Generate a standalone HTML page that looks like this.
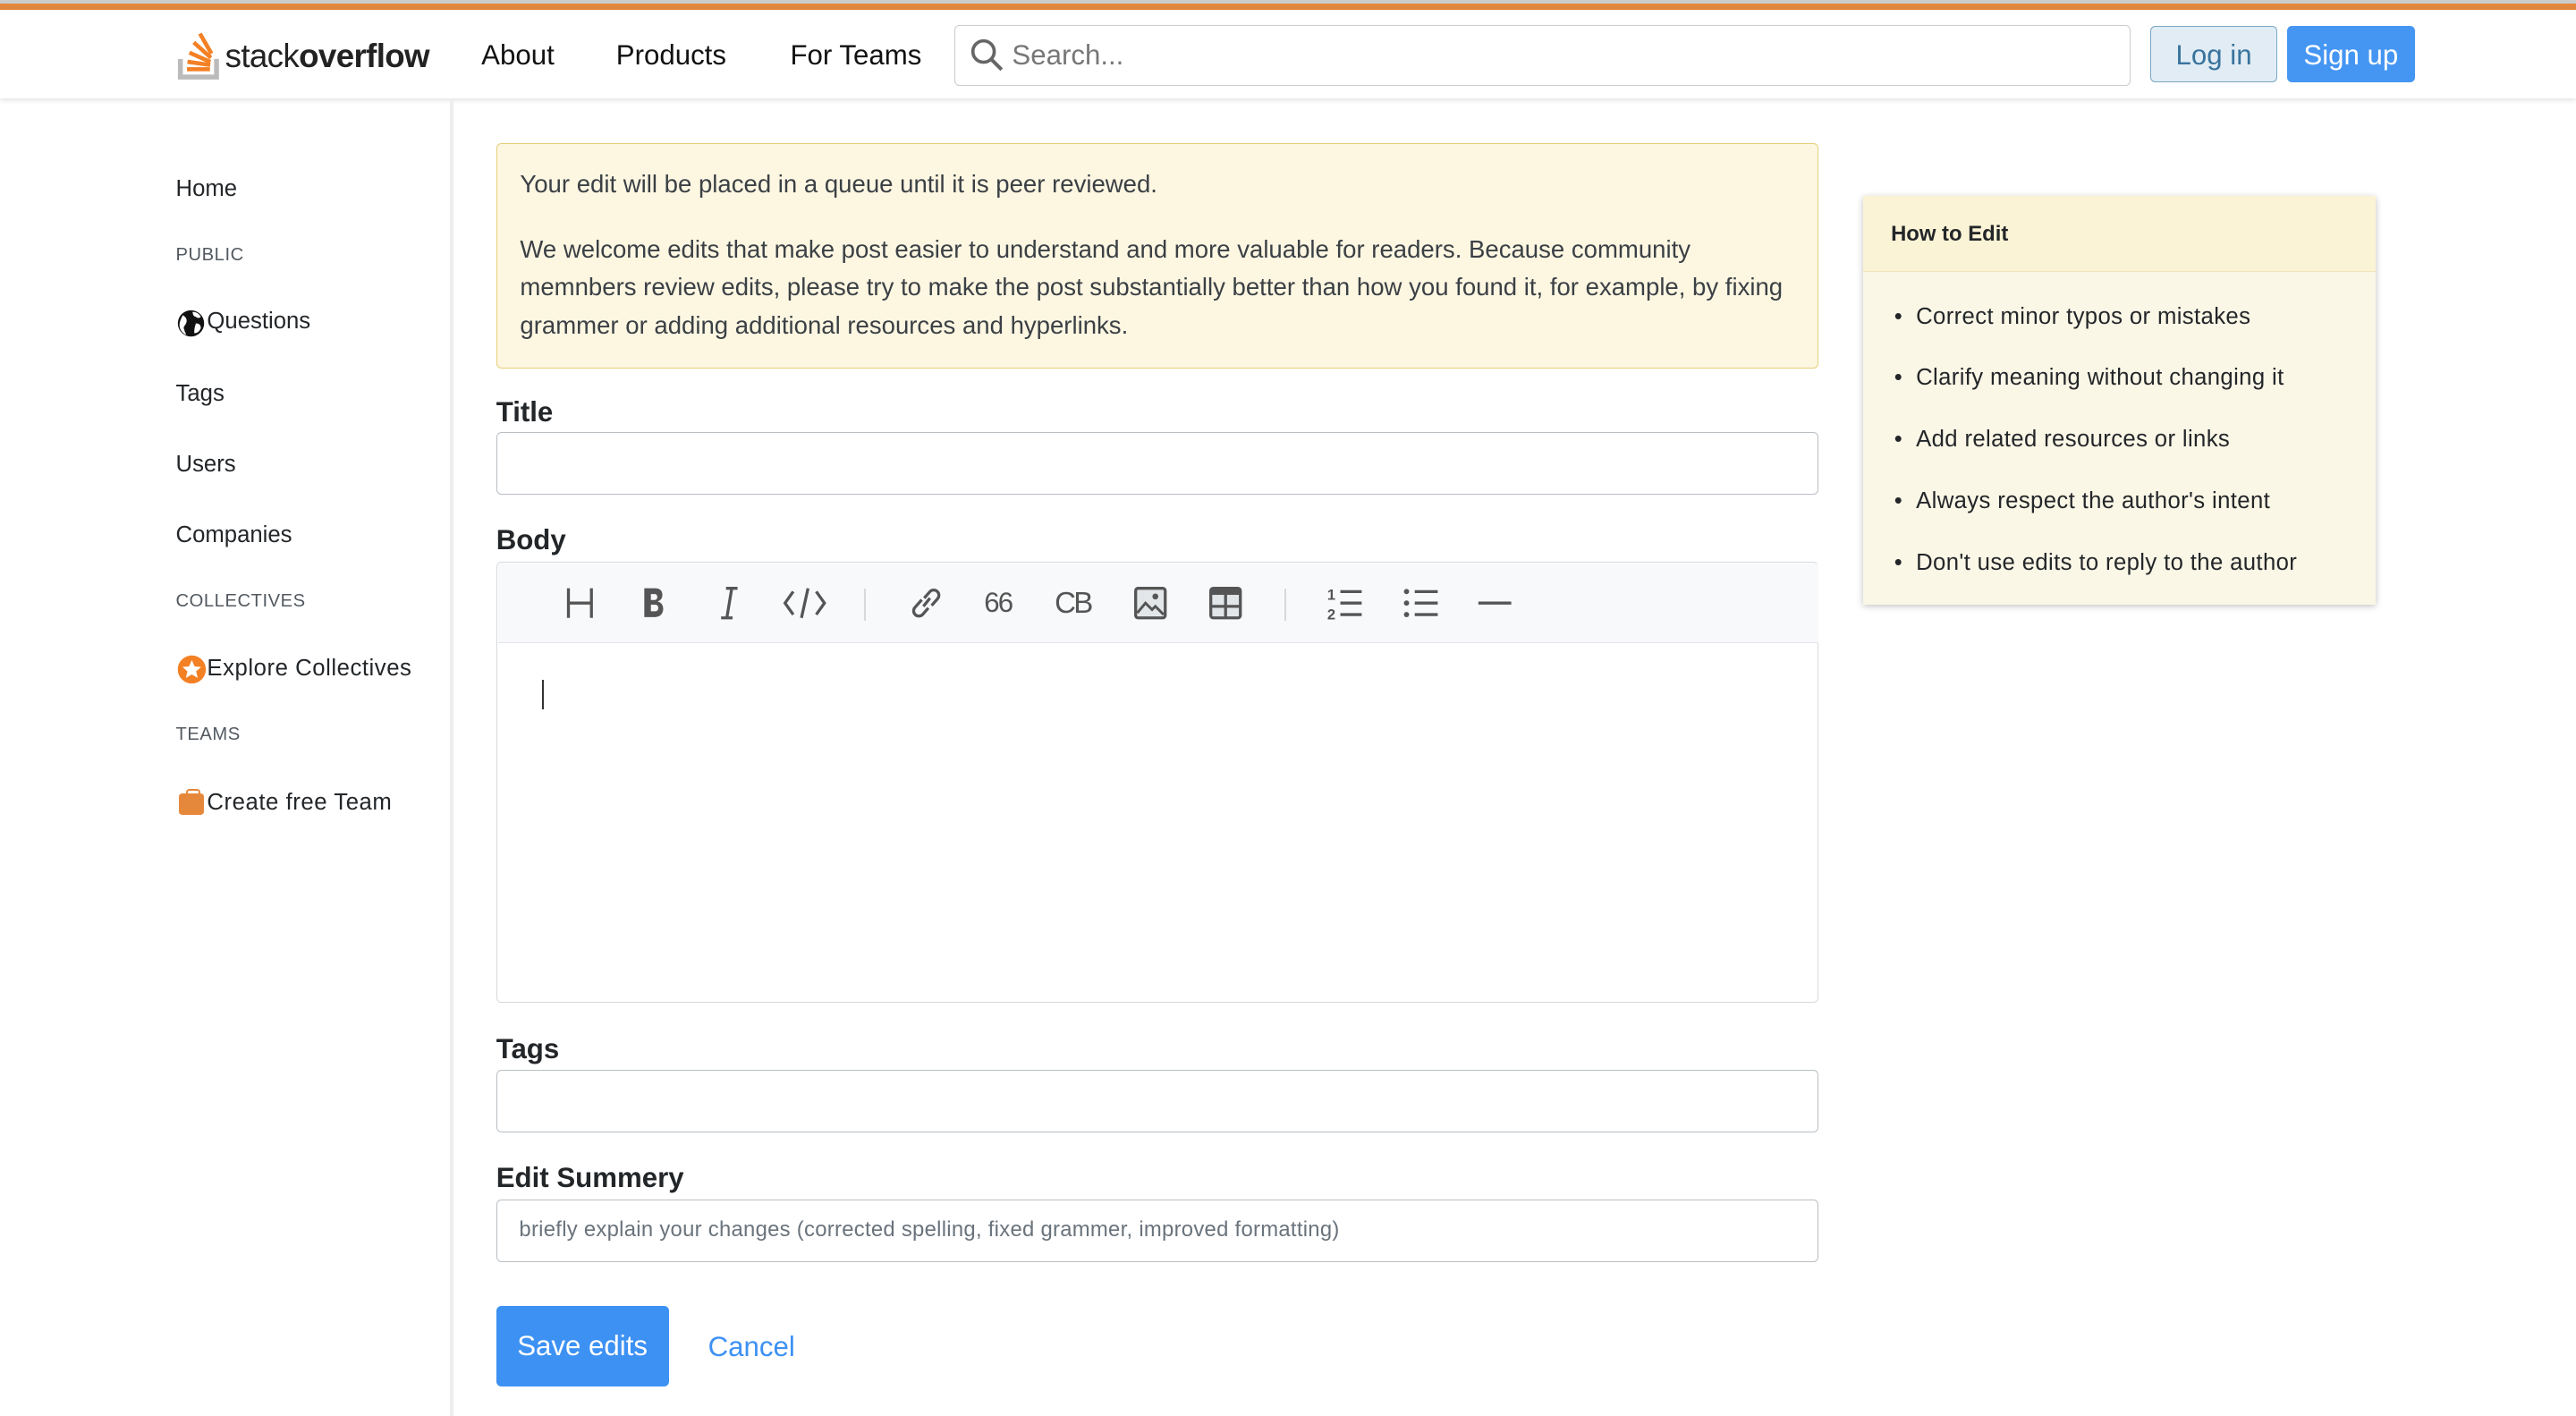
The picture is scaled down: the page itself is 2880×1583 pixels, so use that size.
<!DOCTYPE html>
<html><head><meta charset="utf-8"><style>
html,body{margin:0;padding:0;background:#fff;overflow:hidden}
#w{position:relative;width:1568px;height:862px;zoom:1.83673;font-family:"Liberation Sans",sans-serif;color:#232629}
.a{position:absolute;white-space:nowrap}
.nav{font-size:17px;color:#111;top:24px}
.sb{font-size:14px;color:#232629;left:107px}
.cap{font-size:11px;color:#525960;left:107px;letter-spacing:.3px}
.lbl{font-size:17px;font-weight:bold;left:302px;color:#232629}
.inp{position:absolute;left:302px;width:804px;height:37px;border:1px solid #babfc4;border-radius:3px;background:#fff}
.tb svg{position:absolute;top:356px}
</style></head><body><div id="w">
<div class="a" style="left:0;top:0;width:1568px;height:2px;background:#ccc"></div>
<div class="a" style="left:0;top:2px;width:1568px;height:4px;background:#e2873d"></div>
<div class="a" style="left:0;top:6px;width:1568px;height:54px;background:#fff;box-shadow:0 1px 3px rgba(0,0,0,.12)"></div>
<svg class="a" style="left:108px;top:17px" width="28" height="32" viewBox="0 0 28 32">
<path d="M2 19v11h22V19" fill="none" stroke="#bcbbbb" stroke-width="3"/>
<g fill="#f48024"><rect x="6" y="24" width="14" height="2.5"/><rect x="6.5" y="19.5" width="14" height="2.5" transform="rotate(8 6.5 19.5)"/><rect x="8" y="14" width="14" height="2.5" transform="rotate(24 8 14)"/><rect x="11" y="8" width="14" height="2.5" transform="rotate(42 11 8)"/><rect x="15" y="3" width="14" height="2.5" transform="rotate(60 15 3)"/></g></svg>
<div class="a" style="left:137px;top:23px;font-size:20px;letter-spacing:-.35px;color:#222">stack<b>overflow</b></div>
<div class="a nav" style="left:293px">About</div>
<div class="a nav" style="left:375px">Products</div>
<div class="a nav" style="left:481px">For Teams</div>
<div class="a" style="left:581px;top:15px;width:715px;height:36px;border:1px solid #ccc;border-radius:3px"></div>
<svg class="a" style="left:590px;top:23px" width="22" height="22" viewBox="0 0 22 22"><circle cx="8.5" cy="8.5" r="6.5" fill="none" stroke="#666" stroke-width="2"/><path d="M13.5 13.5l6 6" stroke="#666" stroke-width="2.2"/></svg>
<div class="a" style="left:616px;top:24px;font-size:17px;color:#777">Search...</div>
<div class="a" style="left:1309px;top:16px;width:76px;height:33px;background:#e1ecf4;border:1px solid #7aa7c7;border-radius:3px;color:#39739d;font-size:17px;text-align:center;line-height:35px">Log in</div>
<div class="a" style="left:1392px;top:16px;width:78px;height:34px;background:#4596f3;border-radius:3px;color:#fff;font-size:17px;text-align:center;line-height:36px">Sign up</div>

<div class="a" style="left:274px;top:60px;width:2px;height:802px;background:#eee"></div>
<div class="a sb" style="top:107px">Home</div>
<div class="a cap" style="top:149px">PUBLIC</div>
<svg class="a" style="left:107px;top:188px" width="18" height="18" viewBox="0 0 18 18"><circle cx="9" cy="9" r="8" fill="#111"/><path d="M4 4c2 1 3 3 2 5s-2 2-1 4c0 1 1 2 1 3-2-1-4-3-4-6 0-2 1-4 2-6zM10 2c2 0 4 1 5 3-1 1-2 1-3 0-1 0-2-1-2-3zM12 9c2 0 3 1 3 3-1 2-2 3-4 3 0-2 0-3 1-6z" fill="#fff"/></svg>
<div class="a sb" style="top:188px;left:126px">Questions</div>
<div class="a sb" style="top:232px">Tags</div>
<div class="a sb" style="top:275px">Users</div>
<div class="a sb" style="top:318px">Companies</div>
<div class="a cap" style="top:360px">COLLECTIVES</div>
<svg class="a" style="left:107px;top:398px" width="19" height="19" viewBox="0 0 20 20"><circle cx="10" cy="10" r="9" fill="#f48024"/><path d="M10 4l1.8 4 4.2.4-3.2 2.8 1 4.2L10 13.2 6.2 15.4l1-4.2L4 8.4 8.2 8z" fill="#fff"/></svg>
<div class="a sb" style="top:399px;left:126px;letter-spacing:.3px">Explore Collectives</div>
<div class="a cap" style="top:441px">TEAMS</div>
<div class="a" style="left:109px;top:483px;width:15px;height:13px;background:#e6883c;border-radius:2px"></div>
<div class="a" style="left:113px;top:480px;width:7px;height:4px;border:1.5px solid #e6883c;border-bottom:none;border-radius:2px 2px 0 0"></div>
<div class="a sb" style="top:481px;left:126px;letter-spacing:.3px">Create free Team</div>

<div class="a" style="left:302px;top:87px;width:776px;height:108px;padding:14px;background:#fdf7e2;border:1px solid #e6cf79;border-radius:3px;font-size:15px;line-height:23px;white-space:normal;color:#3b4045">
<div style="margin-top:-1px">Your edit will be placed in a queue until it is peer reviewed.</div>
<div style="margin-top:17px">We welcome edits that make post easier to understand and more valuable for readers. Because community memnbers review edits, please try to make the post substantially better than how you found it, for example, by fixing grammer or adding additional resources and hyperlinks.</div></div>

<div class="a lbl" style="top:241px">Title</div>
<div class="inp" style="top:263px"></div>
<div class="a lbl" style="top:319px">Body</div>
<div class="a" style="left:302px;top:342px;width:804px;height:267px;border:1px solid #d6d9dc;border-radius:3px;background:#fff"></div>
<div class="a" style="left:303px;top:343px;width:804px;height:48px;background:#f8f9fb;border-bottom:1px solid #e3e6e8"></div>
<div class="a" style="left:330px;top:414px;width:1px;height:18px;background:#333"></div>
<div class="tb">
<svg style="left:343px" width="20" height="22" viewBox="0 0 20 22"><path d="M3 2v18M17 2v18M3 11h14" stroke="#555" stroke-width="1.8" fill="none"/></svg>
<svg style="left:388px" width="20" height="22" viewBox="0 0 20 22"><path d="M4 2h6.5c3 0 4.5 1.5 4.5 4s-1.5 3.6-3 4c2 .4 3.5 2 3.5 4.5 0 3-2 5-5 5H4z" fill="#555"/><path d="M8 5.5h2.3c1 0 1.6.7 1.6 1.8s-.6 1.8-1.6 1.8H8zM8 12h2.6c1.2 0 1.9.8 1.9 2s-.7 2-1.9 2H8z" fill="#f8f9fb"/></svg>
<svg style="left:434px" width="20" height="22" viewBox="0 0 20 22"><path d="M8 2h7M5 20h7M11.5 2l-3 18" stroke="#555" stroke-width="1.8" fill="none"/></svg>
<svg style="left:476px" width="28" height="22" viewBox="0 0 28 22"><path d="M7 4L2 11l5 7M21 4l5 7-5 7M16 2l-4 18" stroke="#555" stroke-width="1.8" fill="none"/></svg>
<div class="a" style="left:526px;top:358px;width:1px;height:20px;background:#d6d9dc"></div>
<svg style="left:552px" width="24" height="22" viewBox="0 0 24 22"><path d="M10 13l4-5M9 9l-4 4.5a3 3 0 0 0 4.5 4.5L13 14M15 12.5l3.5-4A3 3 0 0 0 14 4l-3.5 4" stroke="#555" stroke-width="1.8" fill="none"/></svg>
<div class="a" style="left:599px;top:357px;font-size:17px;color:#555;letter-spacing:-1px">66</div>
<div class="a" style="left:642px;top:357px;font-size:18px;color:#555;letter-spacing:-1.5px">CB</div>
<svg style="left:689px" width="22" height="22" viewBox="0 0 22 22"><rect x="2" y="2" width="18" height="18" rx="1.5" fill="#e3e6e8" stroke="#555" stroke-width="1.8"/><path d="M3 17l5-6 4 4 2-2 5 5" stroke="#555" stroke-width="1.6" fill="none"/><circle cx="14" cy="7" r="1.8" fill="#555"/></svg>
<svg style="left:735px" width="22" height="22" viewBox="0 0 22 22"><rect x="2" y="2" width="18" height="18" rx="1.5" fill="#e3e6e8" stroke="#555" stroke-width="1.8"/><rect x="2" y="2" width="18" height="4" fill="#555"/><path d="M11 6v14M2 13h18" stroke="#555" stroke-width="1.8"/></svg>
<div class="a" style="left:782px;top:358px;width:1px;height:20px;background:#d6d9dc"></div>
<svg style="left:807px" width="24" height="22" viewBox="0 0 24 22"><path d="M9 4h13M9 11h13M9 18h13" stroke="#555" stroke-width="1.8"/><text x="1" y="9" font-size="9" font-family="Liberation Sans" fill="#555" font-weight="bold">1</text><text x="1" y="21" font-size="9" font-family="Liberation Sans" fill="#555" font-weight="bold">2</text></svg>
<svg style="left:853px" width="24" height="22" viewBox="0 0 24 22"><path d="M8 4h14M8 11h14M8 18h14" stroke="#555" stroke-width="1.8"/><circle cx="3" cy="4" r="1.6" fill="#555"/><circle cx="3" cy="11" r="1.6" fill="#555"/><circle cx="3" cy="18" r="1.6" fill="#555"/></svg>
<svg style="left:899px" width="22" height="22" viewBox="0 0 22 22"><path d="M1 11h20" stroke="#555" stroke-width="1.8"/></svg>
</div>
<div class="a lbl" style="top:629px">Tags</div>
<div class="inp" style="top:651px"></div>
<div class="a lbl" style="top:707px">Edit Summery</div>
<div class="inp" style="top:730px"></div>
<div class="a" style="left:316px;top:741px;font-size:13px;color:#6a737c;letter-spacing:.15px">briefly explain your changes (corrected spelling, fixed grammer, improved formatting)</div>
<div class="a" style="left:302px;top:795px;width:105px;height:49px;background:#3c91f3;border-radius:3px;color:#fff;font-size:17px;text-align:center;line-height:49px">Save edits</div>
<div class="a" style="left:431px;top:810px;font-size:17px;color:#3c91f3">Cancel</div>

<div class="a" style="left:1134px;top:119px;width:312px;height:249px;background:#fbf7e7;box-shadow:0 1px 4px rgba(0,0,0,.25)"></div>
<div class="a" style="left:1134px;top:119px;width:312px;height:46px;background:#fbf3d5;border-bottom:1px solid #f1e5bc"></div>
<div class="a" style="left:1151px;top:135px;font-size:13px;font-weight:bold;color:#232629">How to Edit</div>
<div class="a" style="left:1153px;top:174px;font-size:14px;line-height:37.5px;color:#232629;letter-spacing:.2px">
• &nbsp;Correct minor typos or mistakes<br>• &nbsp;Clarify meaning without changing it<br>• &nbsp;Add related resources or links<br>• &nbsp;Always respect the author's intent<br>• &nbsp;Don't use edits to reply to the author</div>
</div></body></html>
